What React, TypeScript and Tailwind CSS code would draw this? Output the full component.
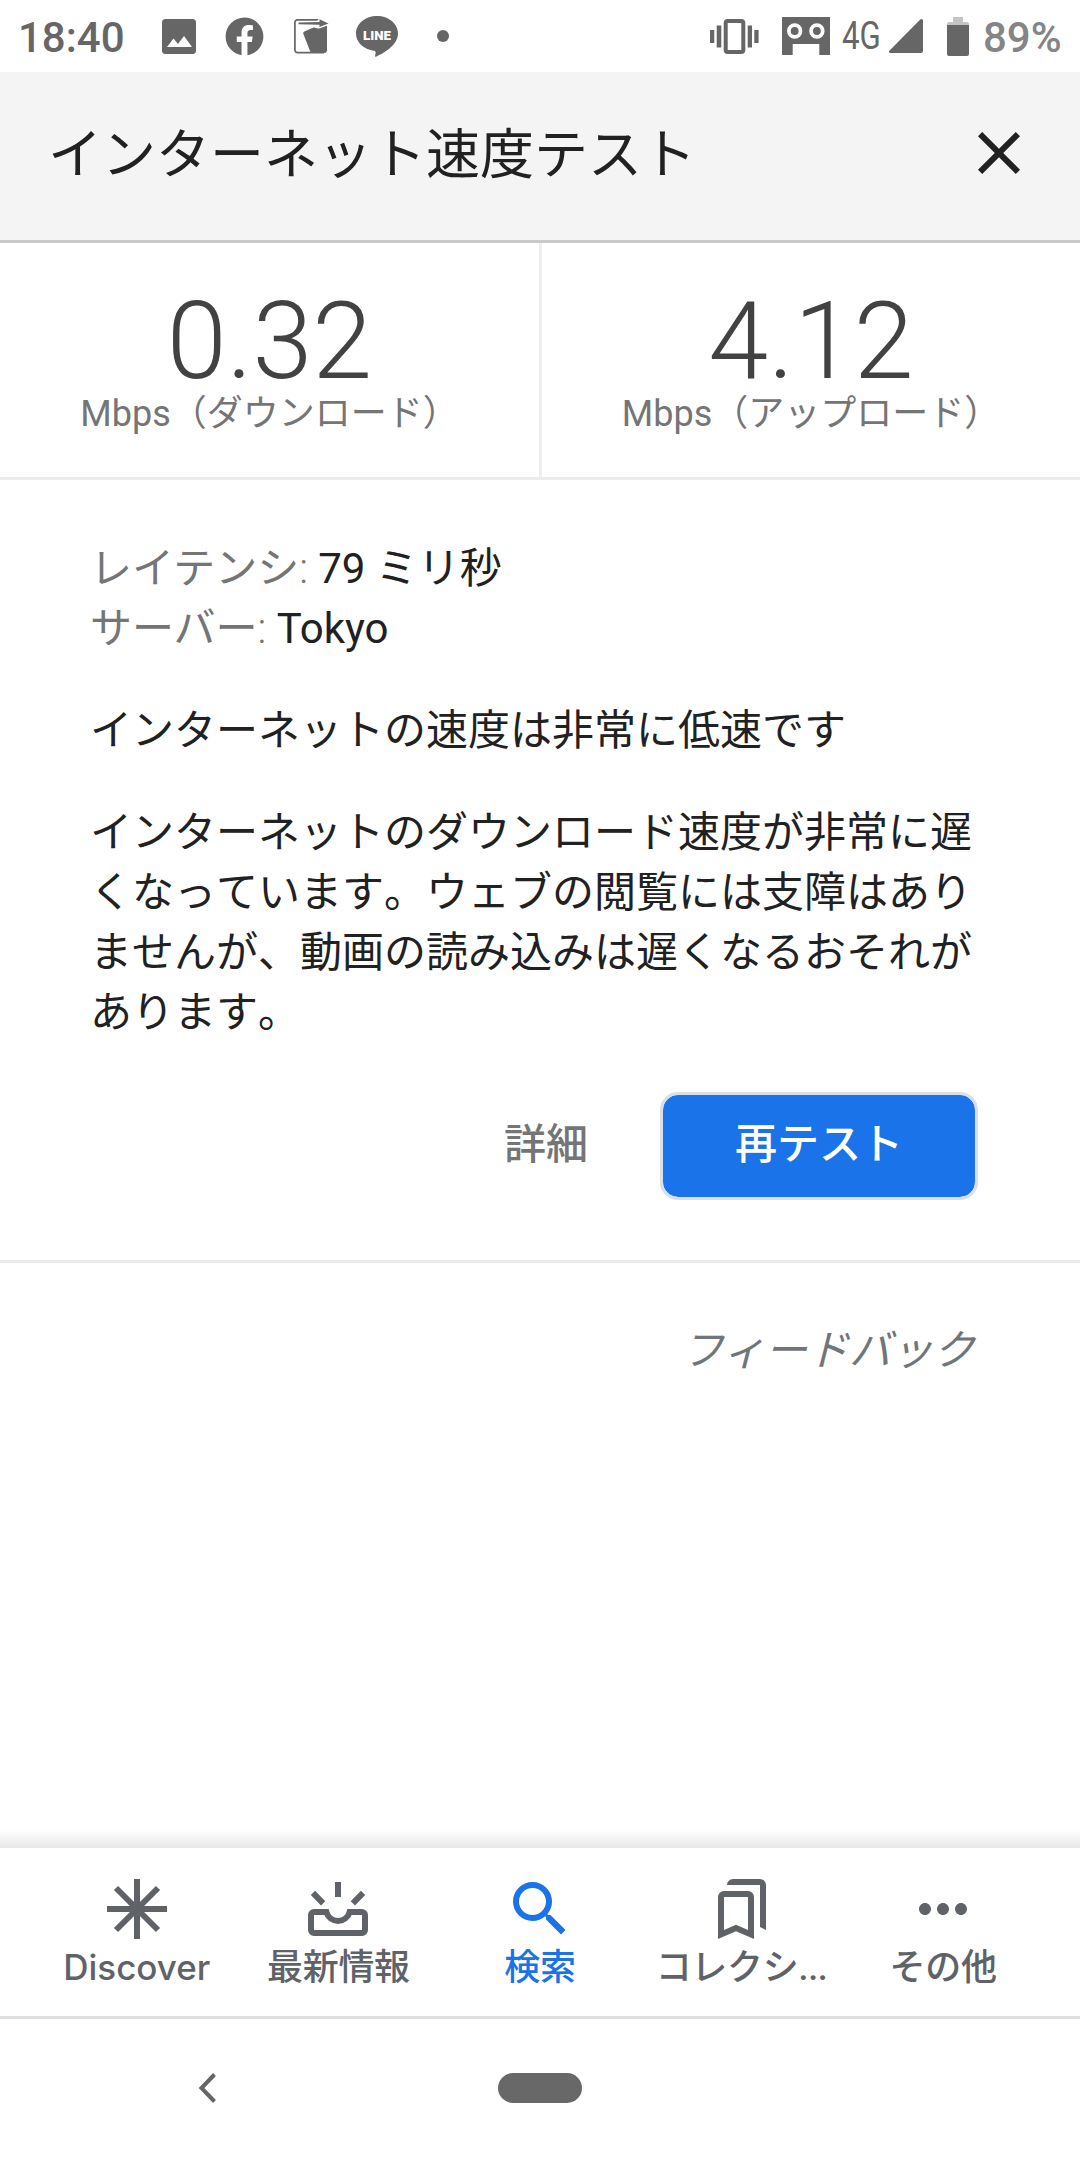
import type { ReactNode } from "react";
import { FaFacebook } from "react-icons/fa";
import { MdClose, MdMoreHoriz, MdSearch } from "react-icons/md";

type Stat = {
  value: string;
  label: string;
};

type Tab = {
  label: string;
  icon: ReactNode;
  active?: boolean;
  latin?: boolean;
};

const STATS: Stat[] = [
  { value: "0.32", label: "Mbps（ダウンロード）" },
  { value: "4.12", label: "Mbps（アップロード）" },
];

const TABS: Tab[] = [
  { label: "Discover", icon: <DiscoverIcon />, latin: true },
  { label: "最新情報", icon: <UpdatesIcon /> },
  { label: "検索", icon: <MdSearch className="size-[72px]" />, active: true },
  { label: "コレクシ...", icon: <CollectionsIcon /> },
  { label: "その他", icon: <MdMoreHoriz className="size-[72px]" /> },
];

function DiscoverIcon() {
  return (
    <svg viewBox="0 0 24 24" className="size-[72px]" stroke="currentColor" strokeWidth="2">
      <path d="M12 2v20M2 12h20M5 5l14 14M19 5L5 19" />
    </svg>
  );
}

function UpdatesIcon() {
  return (
    <svg viewBox="0 0 24 24" className="size-[72px]" fill="none" stroke="currentColor" strokeWidth="2">
      <path d="M12 3v5M3.65 6.6l3.4 3.5M20.35 6.6l-3.4 3.5" />
      <path d="M15.87 13H20a1 1 0 0 1 1 1v5a1 1 0 0 1-1 1H4a1 1 0 0 1-1-1v-5a1 1 0 0 1 1-1h4.13a4 4 0 0 0 7.74 0z" />
    </svg>
  );
}

function CollectionsIcon() {
  return (
    <svg viewBox="0 0 24 24" className="size-[72px]" fill="currentColor">
      <path d="M14 6H6a2 2 0 0 0-2 2v14l6-2.57L16 22V8a2 2 0 0 0-2-2zm0 12.97l-4-1.72-4 1.72V8h8z" />
      <path d="M7 4a2 2 0 0 1 2-2h9a2 2 0 0 1 2 2v15l-2-1V4z" />
    </svg>
  );
}

function PhotoIcon() {
  return (
    <svg viewBox="0 0 34 35" className="h-[35px] w-[34px]">
      <rect width="34" height="35" rx="3.5" fill="currentColor" />
      <path d="M5 28l6.5-8.5 4.5 5.5L22 17l8 11z" fill="#fff" />
    </svg>
  );
}

function FileMoveIcon() {
  return (
    <svg viewBox="0 0 35 35" className="h-[35px] w-[35px]" fill="currentColor">
      <path d="M23.5 1V.9H3.5A2.6 2.6 0 0 0 .9 3.5v27.6a2.6 2.6 0 0 0 2.6 2.6H30" fill="none" stroke="currentColor" strokeWidth="1.7" />
      <path d="M9.2 14.5c0-1 .5-1.7 1.5-2.2L19 8.7c2-.8 3 .8 5 .8 3 0 6-2 9-2.7V31a3 3 0 0 1-3 3H16.8z" />
      <path d="M4.5 3.5L25.5 2.9V.3L34.5 4.5l-9 3.5V5.7L4.5 5.3z" />
    </svg>
  );
}

function LineIcon() {
  return (
    <svg viewBox="0 0 42 41" className="h-[41px] w-[42px]">
      <path d="M21 0C9.4 0 0 7.7 0 17.5c0 9 7.7 15.7 18 17.2 1.5.3 1.8 1.2 1.6 2.5l-.6 2.8c0 .6.4 1 1 .7C28 37 42 29 42 17.5 42 7.7 32.6 0 21 0z" fill="currentColor" />
      <text x="21" y="23.5" textAnchor="middle" fontSize="13.5" fontWeight="900" textLength="28" lengthAdjust="spacingAndGlyphs" fill="#fff">
        LINE
      </text>
    </svg>
  );
}

function VibrateIcon() {
  return (
    <svg viewBox="0 0 49 35" className="h-[35px] w-[49px]" fill="currentColor">
      <path d="M0 11h4.3v13H0zM6.7 6.5h4.6v22H6.7zM37.7 6.5h4.3v22h-4.3zM44.3 11h4.3v13h-4.3z" />
      <rect x="15.7" y="2" width="17.6" height="31" rx="2" fill="none" stroke="currentColor" strokeWidth="4" />
    </svg>
  );
}

function VoicemailIcon() {
  return (
    <svg viewBox="0 0 48 38" className="h-[38px] w-[48px]">
      <path d="M0 0h48v38H37.3V27H10.7v11H0z" fill="currentColor" />
      <circle cx="12.7" cy="14" r="5.8" fill="currentColor" stroke="#fff" strokeWidth="3.8" />
      <circle cx="34.9" cy="14" r="5.8" fill="currentColor" stroke="#fff" strokeWidth="3.8" />
    </svg>
  );
}

function StatusBar() {
  return (
    <div className="flex h-[72px] items-center text-[#666666]">
      <span className="ml-[18px] w-[108px] pt-[3px] text-[42px] leading-none font-medium">18:40</span>
      <div className="ml-[36px] flex items-center">
        <PhotoIcon />
        <FaFacebook className="ml-[29px] size-[39px]" />
        <div className="ml-[30px]">
          <FileMoveIcon />
        </div>
        <div className="ml-[27px]">
          <LineIcon />
        </div>
        <span className="ml-[39px] size-3 rounded-full bg-[#666666]" />
      </div>
      <div className="mr-[19px] ml-auto flex items-center">
        <VibrateIcon />
        <div className="ml-[23px]">
          <VoicemailIcon />
        </div>
        <span className="ml-[12px] w-[47px] origin-left scale-x-[0.82] text-[38px] leading-none">4G</span>
        <svg viewBox="0 0 34 34" className="size-[34px]" fill="currentColor">
          <path d="M34 2v30a2 2 0 0 1-2 2H1.5C0 34-.5 32.5.6 31.5L31 .7c1.2-1.2 3-.6 3 1.3z" />
        </svg>
        <svg viewBox="0 0 22 39" className="ml-[24px] h-[39px] w-[22px]">
          <path d="M6 0h10v5h4a2 2 0 0 1 2 2v2H0V7a2 2 0 0 1 2-2h4z" fill="#c4c4c4" />
          <path d="M0 8h22v29a2 2 0 0 1-2 2H2a2 2 0 0 1-2-2z" fill="currentColor" />
        </svg>
        <span className="ml-[14px] w-[78px] pt-[3px] text-[42px] leading-none font-medium text-[#858585]">89%</span>
      </div>
    </div>
  );
}

function Header() {
  return (
    <header className="flex h-[171px] items-center justify-between border-b-[3px] border-[#c9c9c9] bg-[#f4f4f4] pr-[45px] pb-1.5 pl-12 text-[#212121]">
      <h1 className="pt-1.5 text-[54px] leading-none">インターネット速度テスト</h1>
      <button type="button" aria-label="閉じる">
        <MdClose className="size-[72px]" />
      </button>
    </header>
  );
}

function Stats() {
  return (
    <div className="grid h-[237px] grid-cols-[542px_1fr] divide-x-[3px] divide-[#eeeeee] border-b-[3px] border-[#ebebeb]">
      {STATS.map((stat) => (
        <div key={stat.label} className="flex flex-col items-center pt-[44px]">
          <span className="text-[108px] leading-none font-light text-[#424242]">{stat.value}</span>
          <span className="text-[36px] leading-[38px] text-[#757575]">{stat.label}</span>
        </div>
      ))}
    </div>
  );
}

function Result() {
  return (
    <section className="h-[783px] border-b-[3px] border-[#ebebeb] px-[90px] pt-[59px] text-[42px] leading-[60px] text-[#212121]">
      <p>
        <span className="text-[#757575]">
          レイテンシ<span className="font-light">: </span>
        </span>
        79 ミリ秒
      </p>
      <p>
        <span className="text-[#757575]">
          サーバー<span className="font-light">: </span>
        </span>
        Tokyo
      </p>
      <p className="mt-[42px]">インターネットの速度は非常に低速です</p>
      <p className="mt-[42px] [font-kerning:none]">
        インターネットのダウンロード速度が非常に遅くなっています。ウェブの閲覧には支障はありませんが、動画の読み込みは遅くなるおそれがあります。
      </p>
      <div className="mt-[49px] -mr-[78px] flex items-center justify-end pr-[90px] font-medium">
        <button type="button" className="mr-[72px] pb-[2px] text-[#757575]">
          詳細
        </button>
        <button
          type="button"
          className="h-[108px] w-[318px] rounded-[18px] border-[3px] border-[#dadfe8] bg-[#1a73e8] bg-clip-padding pb-[2px] text-white"
        >
          再テスト
        </button>
      </div>
    </section>
  );
}

function BottomNav() {
  return (
    <nav className="flex h-[171px] border-b-[3px] border-[#e0e0e0] px-9 pt-[25px]">
      {TABS.map((tab) => (
        <div
          key={tab.label}
          className={`flex flex-1 flex-col items-center font-medium ${tab.active ? "text-[#1a73e8]" : "text-[#5f6368]"}`}
        >
          {tab.icon}
          {tab.latin ? (
            <span className="mt-[4px] font-[Inter] text-[35px] leading-[36px]">{tab.label}</span>
          ) : (
            <span className="mt-[5px] text-[36px] leading-[36px] tracking-[-0.3px]">{tab.label}</span>
          )}
        </div>
      ))}
    </nav>
  );
}

export default function App() {
  return (
    <div
      lang="ja"
      className="flex h-[2160px] w-[1080px] flex-col overflow-hidden bg-white font-[Roboto,'Noto_Sans_CJK_JP',sans-serif]"
    >
      <StatusBar />
      <Header />
      <Stats />
      <Result />
      <div className="mt-[58px] flex justify-end pr-[105px]">
        <a className="text-[42px] leading-[60px] text-[#70757a] italic">フィードバック</a>
      </div>
      <div className="mt-auto h-[18px] bg-linear-to-b from-white to-[#e8e8e8]" />
      <BottomNav />
      <div className="flex h-[141px] items-center pb-[3px] text-[#666666]">
        <svg viewBox="0 0 18 30" className="ml-[198px] h-[30px] w-[18px]" fill="none" stroke="currentColor" strokeWidth="4">
          <path d="M16.5 1.5L3.5 15l13 13.5" />
        </svg>
        <span className="ml-[282px] h-[30px] w-[84px] rounded-full bg-[#686868]" />
      </div>
    </div>
  );
}
